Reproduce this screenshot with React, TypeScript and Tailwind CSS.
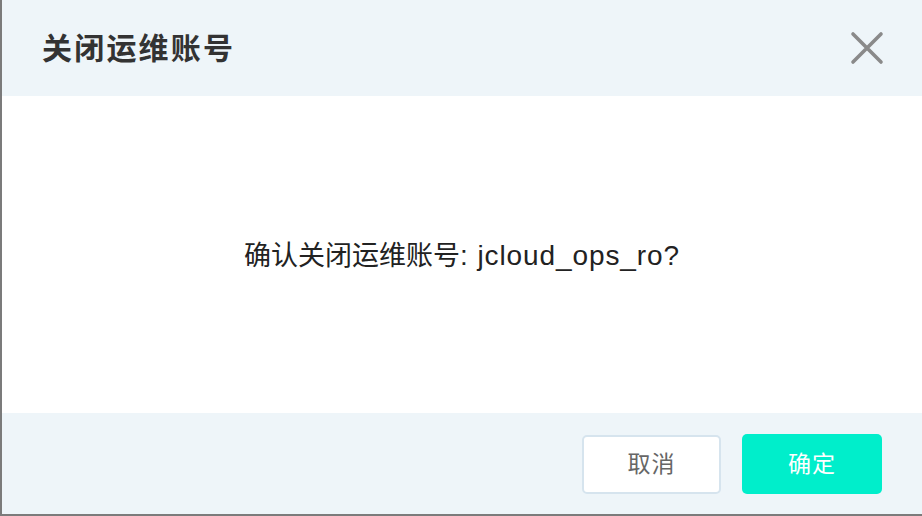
import React from "react";

export default function App() {
  return (
    <div
      className="w-[922px] h-[516px] flex flex-col bg-white border-l-2 border-b-2 border-[#7b7b7b] overflow-hidden"
      style={{ fontFamily: '"Liberation Sans", "Noto Sans CJK SC", sans-serif' }}
    >
      <div className="h-[96px] shrink-0 bg-[#eef5f9] flex items-center justify-between pl-[40px] pr-[38px]">
        <h1 className="text-[30px] leading-none font-bold text-[#333] tracking-[2.2px] pt-[2px]">关闭运维账号</h1>
        <svg width="34" height="34" viewBox="0 0 34 34" className="text-[#8a8a8a]">
          <path d="M3 3 L31 31 M31 3 L3 31" stroke="currentColor" strokeWidth="3.6" strokeLinecap="round" />
        </svg>
      </div>
      <div className="h-[317px] shrink-0 flex items-center justify-center pt-[2px]">
        <p className="text-[27px] text-[#222] whitespace-nowrap">
          确认关闭运维账号<span className="text-[28px] tracking-[0.9px]">: jcloud_ops_ro?</span>
        </p>
      </div>
      <div className="flex-1 bg-[#eef5f9] flex items-center justify-end gap-[21px] pr-[40px] pt-[1px]">
        <button className="w-[139px] h-[59px] rounded-[5px] border-2 border-[#d6e4ee] bg-white text-[23px] tracking-[1px] text-[#666]">
          取消
        </button>
        <button className="w-[140px] h-[60px] rounded-[5px] bg-[#00eecb] text-[23px] tracking-[1px] text-white">
          确定
        </button>
      </div>
    </div>
  );
}
